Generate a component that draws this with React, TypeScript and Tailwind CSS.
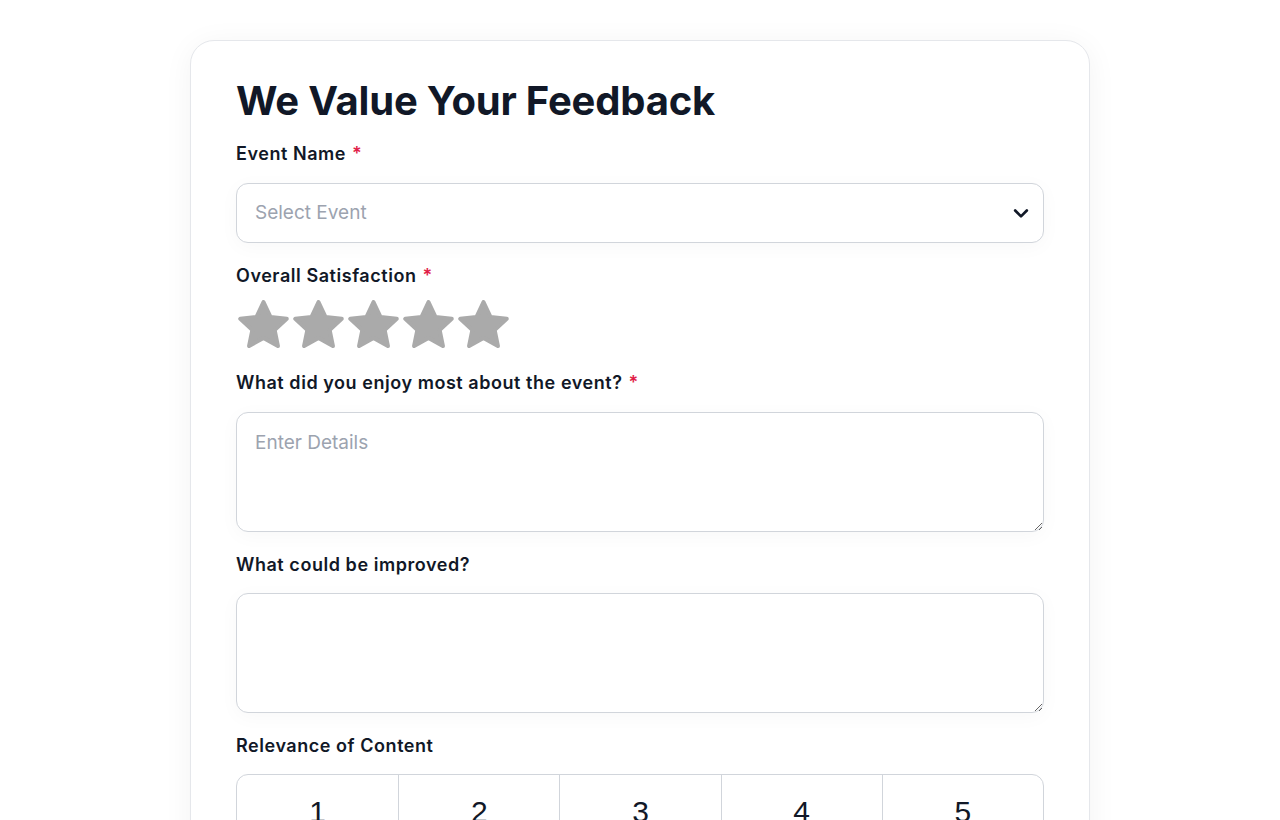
import React from "react";

function Star() {
  return (
    <svg width="51" height="48" viewBox="2 1.8 20 19" className="shrink-0">
      <path
        d="M12 2.6l2.75 5.9 6.45.75-4.8 4.4 1.3 6.35L12 16.8 6.3 20l1.3-6.35-4.8-4.4 6.45-.75z"
        fill="#aaaaaa"
        stroke="#aaaaaa"
        strokeWidth="1.6"
        strokeLinejoin="round"
      />
    </svg>
  );
}

function Label({ text, required }: { text: string; required?: boolean }) {
  return (
    <label className="block text-[18px] font-semibold leading-7 tracking-[0.55px] text-[#111827]">
      {text}
      {required && <span className="ml-1.5 text-[#e11d48]">*</span>}
    </label>
  );
}

export default function App() {
  return (
    <div
      className="min-h-screen bg-white pt-10"
      style={{ fontFamily: "Inter, 'Noto Sans', sans-serif" }}
    >
      <div className="mx-auto w-[900px] rounded-3xl border border-[#e5e7eb] bg-white px-[45px] pt-10 pb-10 shadow-[0_4px_30px_rgba(0,0,0,0.05)]">
        <h1 className="text-[40px] font-bold leading-10 tracking-[-0.2px] text-[#111827]">
          We Value Your Feedback
        </h1>

        <div className="mt-[19px]">
          <Label text="Event Name" required />
          <div className="mt-[15px] flex h-[60px] items-center justify-between rounded-xl border border-[#d1d5db] bg-white pl-[18px] pr-[12px] shadow-[0_4px_20px_rgba(0,0,0,0.03)]">
            <span className="text-[19px] text-[#9ca3af]">Select Event</span>
            <svg width="20" height="20" viewBox="0 0 24 24" fill="none">
              <path d="M5 9l7 7 7-7" stroke="#111827" strokeWidth="3.2" strokeLinecap="round" strokeLinejoin="round" />
            </svg>
          </div>
        </div>

        <div className="mt-[19px]">
          <Label text="Overall Satisfaction" required />
          <div className="mt-[10px] flex gap-[4px] pl-[2px]">
            <Star />
            <Star />
            <Star />
            <Star />
            <Star />
          </div>
        </div>

        <div className="mt-[21px]">
          <Label text="What did you enjoy most about the event?" required />
          <textarea
            placeholder="Enter Details"
            className="mt-[15px] block h-[120px] w-full rounded-xl border border-[#d1d5db] bg-white px-[18px] py-[16px] text-[19px] text-[#111827] placeholder-[#9ca3af] shadow-[0_4px_20px_rgba(0,0,0,0.03)] outline-none"
          />
        </div>

        <div className="mt-[19px]">
          <Label text="What could be improved?" />
          <textarea className="mt-[14px] block h-[120px] w-full rounded-xl border border-[#d1d5db] bg-white px-[18px] py-[16px] text-[19px] text-[#111827] shadow-[0_4px_20px_rgba(0,0,0,0.03)] outline-none" />
        </div>

        <div className="mt-[19px]">
          <Label text="Relevance of Content" />
          <div className="mt-[14px] grid grid-cols-5 overflow-hidden rounded-xl border border-[#d1d5db]">
            {[1, 2, 3, 4, 5].map((n) => (
              <button
                key={n}
                className="flex h-[72px] items-center justify-center border-l border-[#d1d5db] text-[30px] font-light text-[#111827] first:border-l-0"
                style={{ fontFamily: "'Liberation Sans', Arial, sans-serif" }}
              >
                {n}
              </button>
            ))}
          </div>
        </div>
      </div>
    </div>
  );
}
